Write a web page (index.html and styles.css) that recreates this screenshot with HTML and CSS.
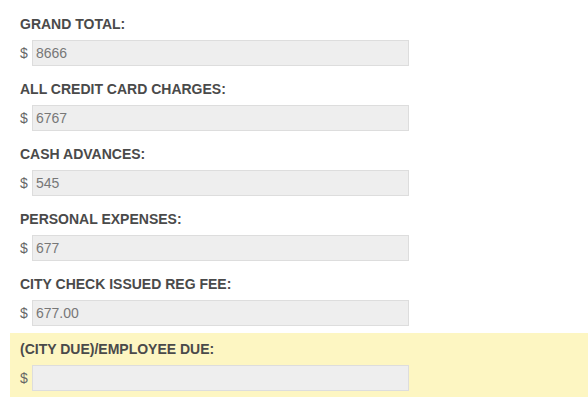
FILE: index.html
```html
<!DOCTYPE html>
<html lang="en">
<head>
    <meta charset="UTF-8">
    <title>Expense Totals</title>
    <link rel="stylesheet" href="styles.css">
</head>
<body>
    <main class="totals">
        <div class="field">
            <label for="grandTotal">Grand Total:</label>
            <div class="money">
                <span class="currency">$</span>
                <input type="text" id="grandTotal" value="8666" readonly>
            </div>
        </div>
        <div class="field">
            <label for="cardCharges">All Credit Card Charges:</label>
            <div class="money">
                <span class="currency">$</span>
                <input type="text" id="cardCharges" value="6767" readonly>
            </div>
        </div>
        <div class="field">
            <label for="cashAdvances">Cash Advances:</label>
            <div class="money">
                <span class="currency">$</span>
                <input type="text" id="cashAdvances" value="545" readonly>
            </div>
        </div>
        <div class="field">
            <label for="personal">Personal Expenses:</label>
            <div class="money">
                <span class="currency">$</span>
                <input type="text" id="personal" value="677" readonly>
            </div>
        </div>
        <div class="field">
            <label for="regFee">City Check Issued Reg Fee:</label>
            <div class="money">
                <span class="currency">$</span>
                <input type="text" id="regFee" value="677.00" readonly>
            </div>
        </div>
        <div class="field highlight">
            <label for="due">(City Due)/Employee Due:</label>
            <div class="money">
                <span class="currency">$</span>
                <input type="text" id="due" value="" readonly>
            </div>
        </div>
    </main>
</body>
</html>
```

FILE: styles.css
```css
body {
    margin: 0;
    font-family: "Liberation Sans", Arial, sans-serif;
    font-size: 14px;
    background-color: #ffffff;
    color: #444444;
}
.totals {
    display: flex;
    flex-direction: column;
    gap: 1px;
    padding: 8px 0 0 10px;
}
.field {
    height: 64px;
    box-sizing: border-box;
    padding: 9px 10px 0;
}
.field label {
    display: block;
    font-weight: bold;
    text-transform: uppercase;
    line-height: 15px;
    margin-bottom: 8px;
    color: #4a4a4a;
}
.money {
    display: flex;
    align-items: center;
    gap: 4px;
}
.currency {
    color: #666666;
    width: 8px;
}
.money input {
    width: 377px;
    height: 26px;
    box-sizing: border-box;
    margin: 0;
    padding: 0 3px;
    border: 1px solid #dddddd;
    background-color: #eeeeee;
    font-family: "Liberation Sans", Arial, sans-serif;
    font-size: 14px;
    color: #777777;
    outline: none;
}
.highlight {
    background-color: #fdf6c2;
}
```
